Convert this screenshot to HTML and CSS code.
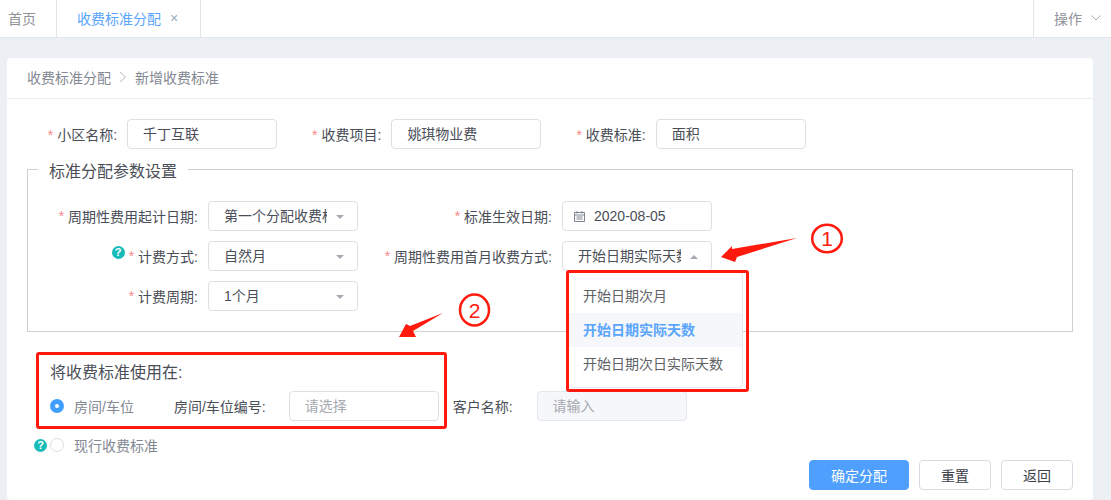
FILE: index.html
```html
<!DOCTYPE html>
<html lang="zh-CN">
<head>
<meta charset="utf-8">
<title>新增收费标准</title>
<link rel="stylesheet" href="styles.css">
</head>
<body>
<header class="tabs">
  <div class="tab tab-home">首页</div>
  <div class="tab tab-active">收费标准分配<span class="tab-close">×</span></div>
  <div class="tabs-spacer"></div>
  <div class="tab-actions">操作
    <svg class="chev" width="10" height="6" viewBox="0 0 10 6"><path d="M.5.5 5 5 9.5.5" fill="none" stroke="#a9adb5"/></svg>
  </div>
</header>

<main class="main">
  <section class="card">
    <div class="crumb">
      <span>收费标准分配</span>
      <svg class="crumb-sep" width="8" height="12" viewBox="0 0 8 12"><path d="M1 1l5.500 5L1 11" fill="none" stroke="#b4b8c0"/></svg>
      <span>新增收费标准</span>
    </div>
    <div class="card-body">
      <div class="top-row">
        <div class="field"><label class="label"><i class="star">*</i>小区名称:</label><div class="box">千丁互联</div></div>
        <div class="field"><label class="label"><i class="star">*</i>收费项目:</label><div class="box">姚琪物业费</div></div>
        <div class="field"><label class="label"><i class="star">*</i>收费标准:</label><div class="box">面积</div></div>
      </div>

      <fieldset class="params">
        <legend class="params-title">标准分配参数设置</legend>
        <div class="params-grid">
          <label class="label label-cell"><i class="star">*</i>周期性费用起计日期:</label>
          <div class="box select"><span class="select-text">第一个分配收费标</span><i class="caret"></i></div>
          <label class="label label-cell"><i class="star">*</i>标准生效日期:</label>
          <div class="box date">
            <svg class="cal" width="11" height="11" viewBox="0 0 11 11"><path d="M.5 1.500h10v9H.5zM.5 4h10M3 0v2.500M8 0v2.500M2.500 6h6M2.500 8h6" fill="none" stroke="#7d8492"/></svg>
            2020-08-05
          </div>

          <label class="label label-cell"><span class="help help-label">?</span><i class="star">*</i>计费方式:</label>
          <div class="box select"><span class="select-text">自然月</span><i class="caret"></i></div>
          <label class="label label-cell"><i class="star">*</i>周期性费用首月收费方式:</label>
          <div class="box select select-open">
            <span class="select-text">开始日期实际天数</span><i class="caret caret-up"></i>
            <ul class="menu">
              <li class="menu-item">开始日期次月</li>
              <li class="menu-item menu-item-on">开始日期实际天数</li>
              <li class="menu-item">开始日期次日实际天数</li>
            </ul>
          </div>

          <label class="label label-cell"><i class="star">*</i>计费周期:</label>
          <div class="box select"><span class="select-text">1个月</span><i class="caret"></i></div>
        </div>
      </fieldset>

      <div class="apply">
        <h3 class="apply-title">将收费标准使用在:</h3>
        <div class="apply-row">
          <span class="radio radio-on"></span>
          <span class="radio-text">房间/车位</span>
          <label class="apply-label apply-label-room">房间/车位编号:</label>
          <div class="box placeholder">请选择</div>
          <label class="apply-label apply-label-cust">客户名称:</label>
          <div class="box placeholder disabled">请输入</div>
        </div>
      </div>

      <div class="current">
        <span class="help">?</span>
        <span class="radio"></span>
        <span class="radio-text">现行收费标准</span>
      </div>

      <div class="actions">
        <button class="btn btn-primary">确定分配</button>
        <button class="btn">重置</button>
        <button class="btn">返回</button>
      </div>
    </div>
  </section>
</main>

<div class="mark mark-one"></div>
<div class="mark mark-two"></div>
<svg class="notes" width="1111" height="500" viewBox="0 0 1111 500">
  <polygon points="721,257 732,246 732,249 797,238 737,257 735,262" fill="#ff1a0d"/>
  <polygon points="399,337 406,324 410,326 443,313 413,331 416,337" fill="#ff1a0d"/>
  <ellipse cx="827" cy="238.500" rx="14.800" ry="13.800" fill="none" stroke="#ff1a0d" stroke-width="2.500"/>
  <ellipse cx="474.500" cy="310" rx="14.500" ry="15.500" fill="none" stroke="#ff1a0d" stroke-width="2.500"/>
  <text class="note-num" x="827" y="246" text-anchor="middle">1</text>
  <text class="note-num" x="474.500" y="318" text-anchor="middle">2</text>
</svg>
</body>
</html>
```

FILE: styles.css
```css
* { box-sizing: border-box; }
html, body { height: 100%; }
body {
  margin: 0;
  height: 500px;
  overflow: hidden;
  position: relative;
  background: #ecf0f4;
  color: #4a4e57;
  font-family: "Liberation Sans", "Noto Sans CJK SC", sans-serif;
  font-size: 14px;
}

/* tabs */
.tabs {
  display: flex;
  height: 38px;
  background: #fff;
  border-bottom: 1px solid #e2e5e9;
}
.tab { display: flex; align-items: center; padding-bottom: 2px; color: #909399; }
.tab-home { width: 57px; padding-left: 8px; border-right: 1px solid #e2e5e9; }
.tab-active { width: 144px; padding-left: 20px; color: #5aa5fd; border-right: 1px solid #e2e5e9; }
.tab-close { margin-left: 9px; font-size: 14px; color: #9ab; line-height: 1; }
.tabs-spacer { flex: 1; }
.tab-actions {
  width: 78px;
  display: flex;
  align-items: center;
  padding: 0 0 2px 20px;
  border-left: 1px solid #e2e5e9;
  color: #909399;
}
.chev { margin-left: 9px; }

/* card */
.main { padding: 20px 18px 0 7px; }
.card { background: #fff; border-radius: 4px; height: 442px; }
.crumb {
  display: flex;
  align-items: center;
  height: 41px;
  padding: 0 0 2px 20px;
  border-bottom: 1px solid #e9eef3;
  color: #838892;
}
.crumb-sep { margin: 0 8px; }
.card-body { padding: 20px 20px 0; }

/* shared controls */
.label { color: #4a4e57; white-space: nowrap; margin-right: 10px; }
.star { font-style: normal; color: #f78989; margin-right: 4px; }
.box {
  width: 150px;
  height: 30px;
  line-height: 28px;
  padding: 0 15px;
  background: #fff;
  border: 1px solid #dcdfe6;
  border-radius: 4px;
  color: #4a4e57;
  flex: none;
}
.top-row { display: flex; gap: 35px; padding-left: 20.7px; }
.field { display: flex; align-items: center; }

/* parameters */
.params {
  margin: 6px 0 0;
  padding: 18px 0 20px;
  border: 1px solid #cfcfcf;
  min-width: 0;
}
.params-title {
  margin-left: 10px;
  padding: 6px 11px 0;
  font-size: 16px;
  line-height: 22px;
  color: #4a4e57;
}
.params-grid {
  display: grid;
  grid-template-columns: 180px 150px 204px 150px;
  row-gap: 10px;
}
.label-cell {
  display: flex;
  justify-content: flex-end;
  align-items: center;
  margin: 0;
  padding-right: 10px;
}
.select { position: relative; padding-right: 0; }
.select-text {
  display: block;
  width: 103px;
  overflow: hidden;
  white-space: nowrap;
}
.caret {
  position: absolute;
  right: 13px;
  top: 13px;
  border: 4px solid transparent;
  border-top: 4px solid #a8abb3;
  border-bottom: 0;
}
.caret-up { border-top: 0; border-bottom: 4px solid #a8abb3; }
.date { display: flex; align-items: center; padding-left: 11px; }
.cal { margin-right: 9px; }

.help {
  flex: none;
  display: inline-block;
  width: 13px;
  height: 13px;
  border-radius: 50%;
  background: #17bcb9;
  color: #fff;
  font-size: 11px;
  font-weight: 700;
  line-height: 13px;
  text-align: center;
}
.help-label { margin: -8px 4px 0 0; }

/* dropdown */
.menu {
  position: absolute;
  left: 4px;
  top: 30px;
  width: 176px;
  margin: 0;
  padding: 6px 0;
  list-style: none;
  background: #fff;
  border: 1px solid #e4e7ed;
  border-radius: 4px;
  z-index: 2;
}
.menu-item { height: 34px; line-height: 34px; padding-left: 15px; color: #606266; }
.menu-item-on { background: #f5f7fa; color: #5aa5fd; font-weight: 700; }

/* apply section */
.apply { padding: 30px 0 0 23px; }
.apply-title { margin: 0; font-size: 16px; font-weight: 400; line-height: 22px; color: #4a4e57; }
.apply-row { display: flex; align-items: center; margin-top: 7px; }
.radio {
  flex: none;
  width: 14px;
  height: 14px;
  margin-right: 10px;
  border: 1px solid #dcdfe6;
  border-radius: 50%;
  background: #fff;
}
.radio-on { border: 5px solid #409eff; }
.radio-text { color: #838892; }
.apply-label { color: #4a4e57; white-space: nowrap; }
.apply-label-room { margin: 0 23px 0 40px; }
.apply-label-cust { margin: 0 24px 0 14px; }
.placeholder { color: #a6a9b0; }
.disabled { background: #f5f7fa; border-color: #e4e7ed; }

.current { display: flex; align-items: center; height: 20px; margin-top: 14px; padding-left: 7px; }
.current .help { margin-right: 3px; }

/* buttons */
.actions { display: flex; justify-content: flex-end; gap: 10px; margin-top: 5px; }
.btn {
  width: 72px;
  height: 30px;
  padding: 0;
  background: #fff;
  border: 1px solid #d6dbe3;
  border-radius: 4px;
  color: #3c4049;
  font: inherit;
}
.btn-primary { width: 100px; background: #4f9ffe; border-color: #4f9ffe; color: #fff; }

/* annotations over the page */
.mark { position: absolute; border: 3px solid #ff1a0d; border-radius: 3px; z-index: 3; }
.mark-one { left: 566px; top: 270px; width: 183px; height: 122px; }
.mark-two { left: 36px; top: 352px; width: 411px; height: 77px; }
.notes { position: absolute; left: 0; top: 0; z-index: 3; pointer-events: none; }
.note-num { font-family: "Liberation Sans", sans-serif; font-size: 21px; fill: #ff1a0d; }
```
